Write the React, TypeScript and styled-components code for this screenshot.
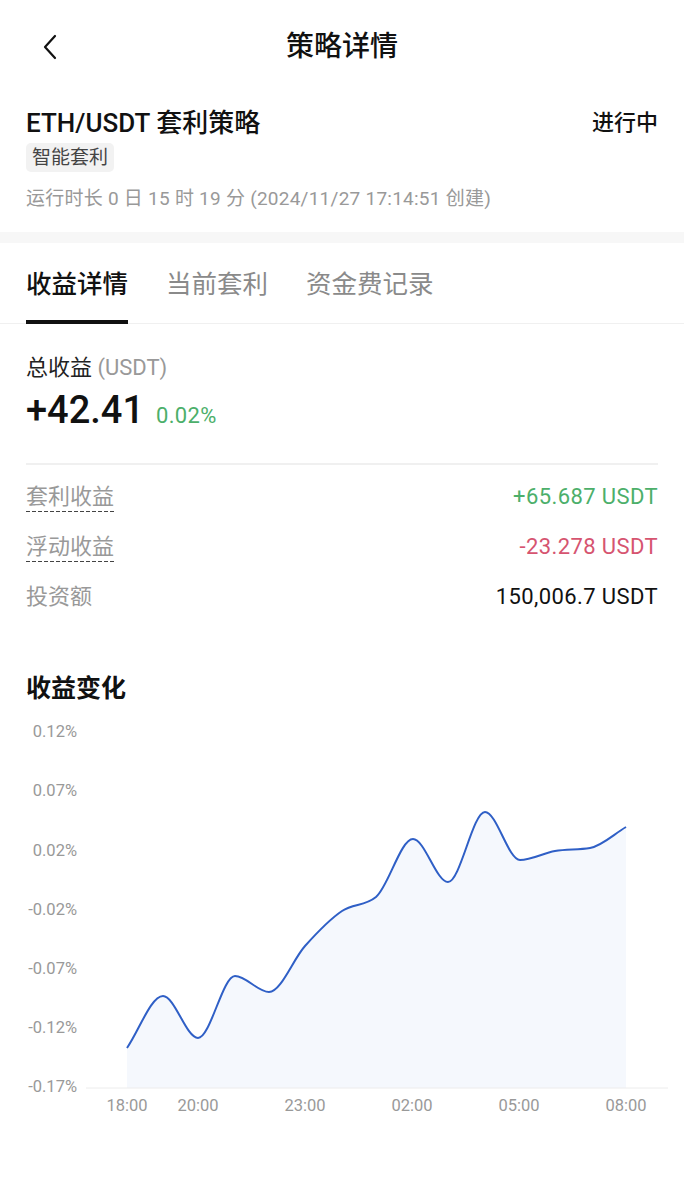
import React from "react";
import styled, { createGlobalStyle } from "styled-components";

const GlobalStyle = createGlobalStyle`
  body {
    margin: 0;
    background: #fff;
    font-family: Roboto, "Noto Sans CJK SC", sans-serif;
    color: #111;
  }
`;

const Page = styled.div`
  width: 684px;
  min-height: 1200px;
  background: #fff;
`;

const Header = styled.header`
  position: relative;
  height: 94px;
  display: flex;
  align-items: center;
  justify-content: center;
`;

const BackButton = styled.button`
  position: absolute;
  left: 38px;
  top: 33px;
  width: 24px;
  height: 28px;
  padding: 0;
  border: none;
  background: none;
  display: flex;
  align-items: center;
  justify-content: center;
`;

const HeaderTitle = styled.h1`
  margin: 0;
  font-size: 28px;
  line-height: 36px;
  font-weight: 500;
  color: #111;
`;

const Info = styled.section`
  padding: 13px 26px 21px;
`;

const TitleRow = styled.div`
  display: flex;
  justify-content: space-between;
  align-items: center;
  height: 32px;
`;

const StrategyName = styled.div`
  font-size: 26px;
  font-weight: 500;
  line-height: 32px;
`;

const Status = styled.div`
  font-size: 22px;
  font-weight: 500;
  line-height: 32px;
`;

const Tag = styled.span`
  display: inline-block;
  margin-top: 4px;
  padding: 4px 6px;
  font-size: 19px;
  line-height: 21px;
  color: #444;
  background: #f2f2f2;
  border-radius: 5px;
`;

const Meta = styled.div`
  margin-top: 15px;
  font-size: 19px;
  line-height: 24px;
  letter-spacing: 0.25px;
  color: #999;
`;

const Band = styled.div`
  height: 11px;
  background: #f7f7f7;
`;

const TabBar = styled.nav`
  display: flex;
  gap: 38px;
  padding: 0 26px;
  border-bottom: 1px solid #f0f0f0;
`;

const Tab = styled.div<{ $active?: boolean }>`
  padding: 24px 0 19px;
  font-size: 25.5px;
  line-height: 34px;
  font-weight: ${(p) => (p.$active ? 500 : 400)};
  color: ${(p) => (p.$active ? "#111" : "#8a8a8a")};
  border-bottom: 4px solid ${(p) => (p.$active ? "#111" : "transparent")};
  margin-bottom: -1px;
`;

const Summary = styled.section`
  padding: 30px 26px 0;
`;

const SummaryLabel = styled.div`
  font-size: 22px;
  line-height: 28px;
  color: #222;

  span {
    color: #999;
  }
`;

const TotalRow = styled.div`
  margin-top: 5px;
  display: flex;
  align-items: baseline;
  gap: 12px;
`;

const TotalValue = styled.div`
  font-size: 38px;
  line-height: 46px;
  font-weight: 500;
`;

const Percent = styled.div`
  font-size: 22px;
  letter-spacing: 0.3px;
  color: #4caf6a;
`;

const Divider = styled.div`
  margin-top: 30px;
  height: 2px;
  background: #f0f0f0;
`;

const Rows = styled.div`
  padding-top: 7px;
`;

const Row = styled.div`
  display: flex;
  justify-content: space-between;
  align-items: center;
  height: 50px;
  font-size: 22px;
  line-height: 28px;
`;

const RowLabel = styled.span<{ $dashed?: boolean }>`
  color: #999;
  padding-bottom: 1px;
  ${(p) =>
    p.$dashed &&
    `
    background-image: linear-gradient(to right, #444 65%, transparent 0);
    background-size: 6px 1px;
    background-repeat: repeat-x;
    background-position: left bottom;
  `}
`;

const RowValue = styled.span<{ $tone?: "up" | "down" }>`
  padding-bottom: 1px;
  letter-spacing: 0.4px;
  color: ${(p) => (p.$tone === "up" ? "#4caf6a" : p.$tone === "down" ? "#d65470" : "#111")};
`;

const ChartTitle = styled.h2`
  margin: 51px 0 0;
  font-size: 25px;
  line-height: 32px;
  font-weight: 600;
  color: #111;
`;

const ChartSvg = styled.svg`
  display: block;
  margin-top: 10px;
  font-family: Roboto, sans-serif;
`;

const points: [number, number][] = [
  [127, 333],
  [163, 281],
  [198, 323],
  [235, 261],
  [269, 277],
  [305, 231],
  [342, 196],
  [376, 182],
  [413, 124],
  [448, 167],
  [485, 97],
  [520, 145],
  [555, 136],
  [590, 133],
  [626, 112],
];

// monotone cubic, same idea as d3 curveMonotoneX
function monotonePath(pts: [number, number][]) {
  const n = pts.length;
  const d: number[] = [];
  for (let i = 0; i < n - 1; i++) {
    d.push((pts[i + 1][1] - pts[i][1]) / (pts[i + 1][0] - pts[i][0]));
  }
  const m: number[] = [d[0]];
  for (let i = 1; i < n - 1; i++) {
    const h0 = pts[i][0] - pts[i - 1][0];
    const h1 = pts[i + 1][0] - pts[i][0];
    const s0 = d[i - 1];
    const s1 = d[i];
    const p = (s0 * h1 + s1 * h0) / (h0 + h1);
    m.push((Math.sign(s0) + Math.sign(s1)) * Math.min(Math.abs(s0), Math.abs(s1), 0.5 * Math.abs(p)) || 0);
  }
  m.push(d[n - 2]);
  let path = `M${pts[0][0]},${pts[0][1]}`;
  for (let i = 0; i < n - 1; i++) {
    const [x0, y0] = pts[i];
    const [x1, y1] = pts[i + 1];
    const h = (x1 - x0) / 3;
    path += ` C${x0 + h},${y0 + m[i] * h} ${x1 - h},${y1 - m[i + 1] * h} ${x1},${y1}`;
  }
  return path;
}

const yLabels = [
  { t: "0.12%", y: 16 },
  { t: "0.07%", y: 75.5 },
  { t: "0.02%", y: 135 },
  { t: "-0.02%", y: 194 },
  { t: "-0.07%", y: 253 },
  { t: "-0.12%", y: 312 },
  { t: "-0.17%", y: 371 },
];

const xLabels = [
  { t: "18:00", x: 127 },
  { t: "20:00", x: 198 },
  { t: "23:00", x: 305 },
  { t: "02:00", x: 412 },
  { t: "05:00", x: 519 },
  { t: "08:00", x: 626 },
];

function ProfitChart() {
  const line = monotonePath(points);
  const base = 373;
  const area = `${line} L626,${base} L127,${base} Z`;
  return (
    <ChartSvg width={684} height={420} viewBox="0 0 684 420">
      <path d={area} fill="#f5f8fd" />
      <line x1={86} y1={base} x2={668} y2={base} stroke="#ececec" strokeWidth={1} />
      <path d={line} fill="none" stroke="#2f5fc6" strokeWidth={2} strokeLinejoin="round" />
      {yLabels.map((l) => (
        <text key={l.t} x={77} y={l.y} textAnchor="end" dominantBaseline="central" fontSize={16.5} fill="#999">
          {l.t}
        </text>
      ))}
      {xLabels.map((l) => (
        <text key={l.t} x={l.x} y={390} textAnchor="middle" dominantBaseline="central" fontSize={16.5} fill="#999">
          {l.t}
        </text>
      ))}
    </ChartSvg>
  );
}

export default function App() {
  return (
    <Page>
      <GlobalStyle />
      <Header>
        <BackButton aria-label="back">
          <svg width="14" height="26" viewBox="0 0 14 26">
            <path d="M12 2 L2 13 L12 24" fill="none" stroke="#111" strokeWidth="2.2" strokeLinecap="round" strokeLinejoin="round" />
          </svg>
        </BackButton>
        <HeaderTitle>策略详情</HeaderTitle>
      </Header>

      <Info>
        <TitleRow>
          <StrategyName>ETH/USDT 套利策略</StrategyName>
          <Status>进行中</Status>
        </TitleRow>
        <Tag>智能套利</Tag>
        <Meta>运行时长 0 日 15 时 19 分 (2024/11/27 17:14:51 创建)</Meta>
      </Info>

      <Band />

      <TabBar>
        <Tab $active>收益详情</Tab>
        <Tab>当前套利</Tab>
        <Tab>资金费记录</Tab>
      </TabBar>

      <Summary>
        <SummaryLabel>
          总收益 <span>(USDT)</span>
        </SummaryLabel>
        <TotalRow>
          <TotalValue>+42.41</TotalValue>
          <Percent>0.02%</Percent>
        </TotalRow>
        <Divider />
        <Rows>
          <Row>
            <RowLabel $dashed>套利收益</RowLabel>
            <RowValue $tone="up">+65.687 USDT</RowValue>
          </Row>
          <Row>
            <RowLabel $dashed>浮动收益</RowLabel>
            <RowValue $tone="down">-23.278 USDT</RowValue>
          </Row>
          <Row>
            <RowLabel>投资额</RowLabel>
            <RowValue>150,006.7 USDT</RowValue>
          </Row>
        </Rows>
        <ChartTitle>收益变化</ChartTitle>
      </Summary>

      <ProfitChart />
    </Page>
  );
}
